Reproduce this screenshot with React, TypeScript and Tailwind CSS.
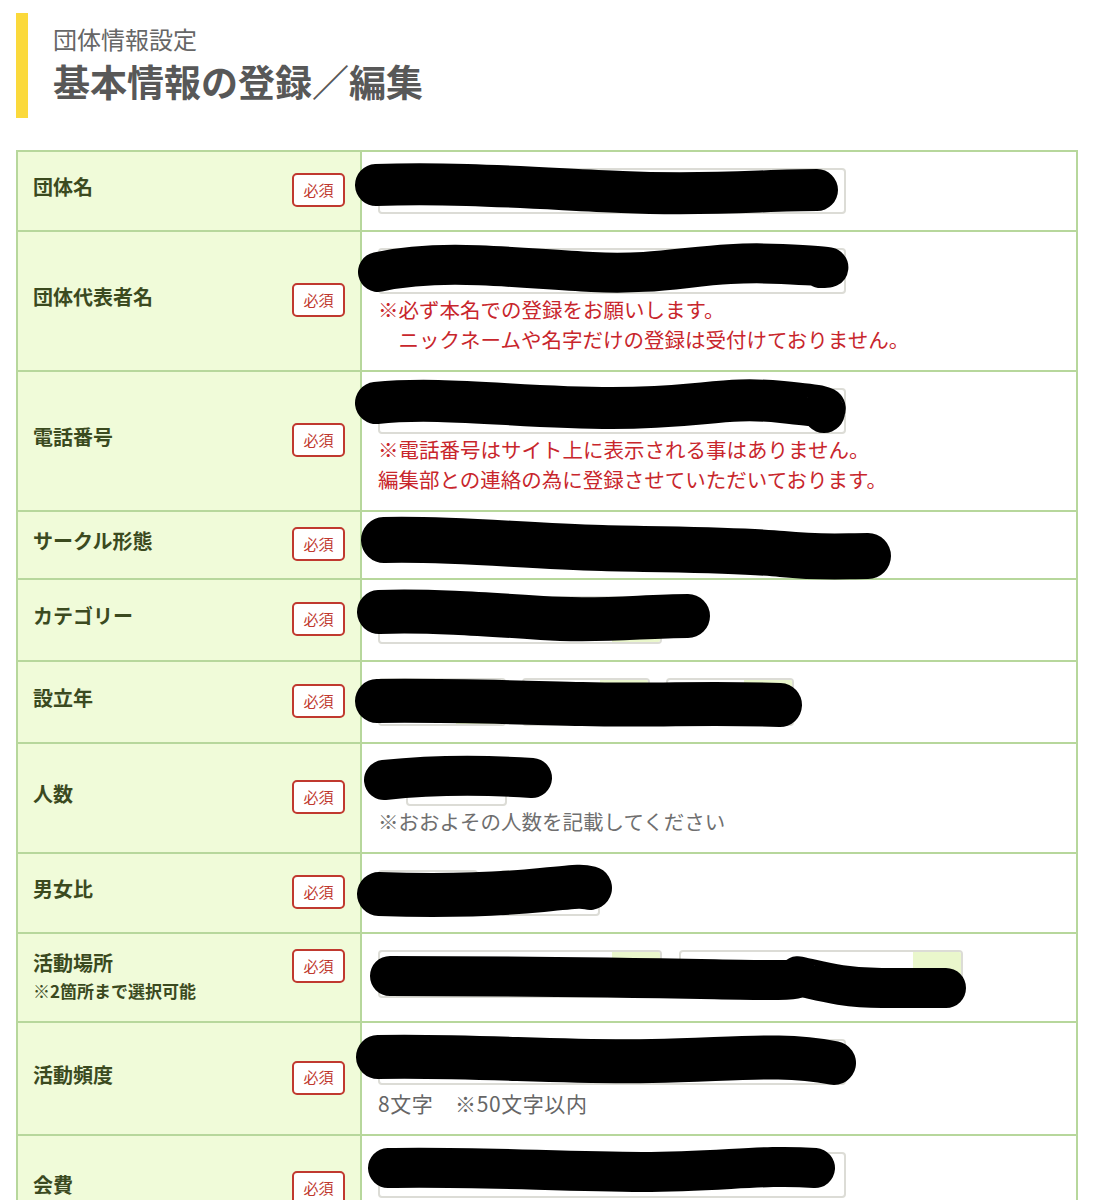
import type { ReactNode } from 'react'

const TextInput = ({ className = 'w-[468px]' }: { className?: string }) => (
  <div className={`h-[46px] rounded-[4px] border-2 border-[#dcdcd6] bg-white ${className}`} />
)

const SelectBox = ({ className = 'w-[284px]' }: { className?: string }) => (
  <div className={`flex h-[48px] justify-end overflow-hidden rounded-[4px] border-2 border-[#dcdcd6] bg-white ${className}`}>
    <div className="w-[48px] bg-[#eaf7cc]" />
  </div>
)

// marker strokes drawn over the filled-in values
const Scribble = ({ d, w = 42 }: { d: string; w?: number }) => (
  <svg className="pointer-events-none absolute left-0 top-0 h-full w-full overflow-visible">
    <path d={d} fill="none" stroke="#000" strokeWidth={w} strokeLinecap="round" strokeLinejoin="round" />
  </svg>
)

const Badge = () => (
  <span className="flex h-[34px] w-[53px] shrink-0 items-center justify-center rounded-[5px] border-2 border-[#c0392f] bg-white text-[15px] text-[#c0392f]">
    必須
  </span>
)

type Row = {
  label: string
  sub?: string
  scribble: string
  stroke?: number
  body: ReactNode
}

const RedNote = ({ children }: { children: ReactNode }) => (
  <p className="text-[20.5px] leading-[30px] text-[#c8262c]">{children}</p>
)

const GrayNote = ({ children }: { children: ReactNode }) => (
  <p className="text-[20.5px] leading-[30px] text-[#6f6f6f]">{children}</p>
)

const rows: Row[] = [
  {
    label: '団体名',
    scribble: 'M14 33 C 90 30, 170 36, 260 40 S 400 38, 455 38',
    body: <TextInput />,
  },
  {
    label: '団体代表者名',
    scribble: 'M16 40 C 80 26, 150 36, 230 40 S 340 28, 420 32 S 450 36, 460 36',
    stroke: 40,
    body: (
      <>
        <TextInput />
        <RedNote>※必ず本名での登録をお願いします。</RedNote>
        <RedNote>　ニックネームや名字だけの登録は受付けておりません。</RedNote>
      </>
    ),
  },
  {
    label: '電話番号',
    scribble: 'M14 31 C 80 24, 160 36, 250 36 S 360 24, 420 30 S 458 36, 462 40',
    body: (
      <>
        <TextInput />
        <RedNote>※電話番号はサイト上に表示される事はありません。</RedNote>
        <RedNote>編集部との連絡の為に登録させていただいております。</RedNote>
      </>
    ),
  },
  {
    label: 'サークル形態',
    scribble: 'M22 28 C 90 26, 160 34, 240 36 S 380 38, 420 42 S 480 44, 506 44',
    stroke: 46,
    body: <div className="h-[34px]" />,
  },
  {
    label: 'カテゴリー',
    scribble: 'M17 32 C 60 30, 120 34, 180 38 S 280 36, 326 36',
    stroke: 44,
    body: <SelectBox />,
  },
  {
    label: '設立年',
    scribble: 'M15 39 C 80 38, 140 40, 220 42 S 340 40, 418 43',
    stroke: 44,
    body: (
      <div className="flex gap-[16px]">
        <SelectBox className="w-[128px]" />
        <SelectBox className="w-[128px]" />
        <SelectBox className="w-[128px]" />
      </div>
    ),
  },
  {
    label: '人数',
    scribble: 'M22 36 C 60 32, 110 30, 170 34',
    stroke: 40,
    body: (
      <>
        <TextInput className="ml-[28px] w-[101px]" />
        <GrayNote>※おおよその人数を記載してください</GrayNote>
      </>
    ),
  },
  {
    label: '男女比',
    scribble: 'M17 40 C 80 42, 140 40, 180 36 S 220 32, 228 34',
    stroke: 44,
    body: (
      <div className="flex gap-[22px]">
        <TextInput className="w-[100px]" />
        <TextInput className="w-[100px]" />
      </div>
    ),
  },
  {
    label: '活動場所',
    sub: '※2箇所まで選択可能',
    scribble: 'M28 42 C 200 42, 330 45, 395 46 S 425 40, 440 43 S 480 54, 520 54 L 584 54',
    stroke: 40,
    body: (
      <div className="flex gap-[17px]">
        <SelectBox />
        <SelectBox className="w-[284px]" />
      </div>
    ),
  },
  {
    label: '活動頻度',
    scribble: 'M16 34 C 110 32, 200 40, 290 38 S 420 30, 472 40',
    stroke: 44,
    body: (
      <>
        <TextInput />
        <p className="mt-[3px] text-[21px] leading-[30px] tracking-[0.6px] text-[#666]">8文字　※50文字以内</p>
      </>
    ),
  },
  {
    label: '会費',
    scribble: 'M26 32 C 110 30, 200 36, 280 36 S 400 28, 453 32',
    stroke: 40,
    body: (
      <>
        <TextInput />
        <div className="h-[28px]" />
      </>
    ),
  },
]

export default function App() {
  return (
    <div className="min-h-[1200px] bg-white pb-10 font-['Noto_Sans_CJK_JP',sans-serif]">
      <header className="ml-4 mt-[13px] h-[105px] border-l-[12px] border-[#fbd93b] pl-[25px] pt-[10px]">
        <p className="text-[24px] leading-[32px] text-[#666]">団体情報設定</p>
        <h1 className="mt-[4px] text-[37px] font-bold leading-[44px] text-[#585858]">基本情報の登録／編集</h1>
      </header>

      <div className="ml-4 mt-[32px] w-[1062px] border-2 border-b-0 border-[#b7d79c]">
        {rows.map((row, i) => (
          <div
            key={row.label}
            className={`grid grid-cols-[344px_1fr] ${i > 0 ? 'border-t-2 border-[#b7d79c]' : ''}`}
          >
            <div className="flex items-center border-r-2 border-[#b7d79c] bg-[#f0fbd9] px-[15px] pb-[17px] pt-[15px]">
              <div className="flex w-full items-start justify-between">
                <div className="font-bold text-[#3b4a1f]">
                  <p className="text-[20px] leading-[28px]">{row.label}</p>
                  {row.sub ? <p className="text-[17px] leading-[27px]">{row.sub}</p> : null}
                </div>
                <Badge />
              </div>
            </div>
            <div className="relative py-4 pl-4">
              {row.body}
              <Scribble d={row.scribble} w={row.stroke} />
            </div>
          </div>
        ))}
      </div>
    </div>
  )
}
